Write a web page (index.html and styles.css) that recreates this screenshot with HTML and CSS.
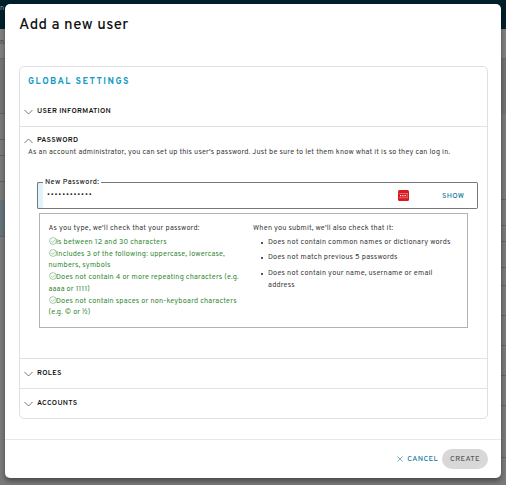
FILE: index.html
```html
<!DOCTYPE html>
<html lang="en">
<head>
<meta charset="utf-8">
<title>Add a new user</title>
<link rel="stylesheet" href="styles.css">
</head>
<body>
<div class="backdrop" aria-hidden="true">
  <div class="topbar">n</div>
  <div class="crumbs">n</div>
  <div class="page">
    <div class="rail"><i class="r1"></i><i class="r2"></i><i class="r3"></i><i class="r4"></i><i class="r5"></i></div>
    <div class="rail right"><i class="q1"></i><i class="q2"></i><i class="q3"></i><i class="q4"></i><i class="q5"></i><i class="q6"></i><i class="q7"></i><i class="q7"></i><i class="q7"></i><i class="q7"></i><i class="q9"></i></div>
  </div>
</div>
<main class="modal">
  <h1>Add a new user</h1>
  <section class="card">
    <h2>GLOBAL SETTINGS</h2>
    <div class="row info"><svg class="chev" viewBox="0 0 9 6"><path d="M.5 1 4.5 5l4-4"/></svg><span>USER INFORMATION</span></div>
    <div class="panel">
      <div class="row head"><svg class="chev" viewBox="0 0 9 6"><path d="M.5 5 4.5 1l4 4"/></svg><span>PASSWORD</span></div>
      <p class="desc">As an account administrator, you can set up this user's password. Just be sure to let them know what it is so they can log in.</p>
      <div class="field">
        <label>New Password:</label>
        <span class="dots">••••••••••••</span>
        <svg class="manager" viewBox="0 0 11 11"><rect width="11" height="11" rx="1.5" fill="#d71920"/><path d="M1 3.5h9M1 7.8h9M9.3 3.7v3.6" stroke="#f29b9b" stroke-width=".6"/><path d="M2 5.6h1.2M4.3 5.6h1.2M6.6 5.6h1.2" stroke="#fff" stroke-width="1.3"/></svg>
        <span class="show">SHOW</span>
      </div>
      <div class="rules">
        <div class="typed">
          <p>As you type, we'll check that your password:</p>
          <div class="ok"><svg viewBox="0 0 8 8"><circle cx="4" cy="4" r="3.4"/><path d="m2.3 4 1.3 1.3L6 2.8"/></svg>Is between 12 and 30 characters</div>
          <div class="ok"><svg viewBox="0 0 8 8"><circle cx="4" cy="4" r="3.4"/><path d="m2.3 4 1.3 1.3L6 2.8"/></svg>Includes 3 of the following: uppercase, lowercase,<br>numbers, symbols</div>
          <div class="ok"><svg viewBox="0 0 8 8"><circle cx="4" cy="4" r="3.4"/><path d="m2.3 4 1.3 1.3L6 2.8"/></svg>Does not contain 4 or more repeating characters (e.g.<br>aaaa or 1111)</div>
          <div class="ok"><svg viewBox="0 0 8 8"><circle cx="4" cy="4" r="3.4"/><path d="m2.3 4 1.3 1.3L6 2.8"/></svg>Does not contain spaces or non-keyboard characters<br>(e.g. © or ½)</div>
        </div>
        <div class="submitted">
          <p>When you submit, we'll also check that it:</p>
          <ul>
            <li>Does not contain common names or dictionary words</li>
            <li>Does not match previous 5 passwords</li>
            <li>Does not contain your name, username or email<br>address</li>
          </ul>
        </div>
      </div>
    </div>
    <div class="row roles"><svg class="chev" viewBox="0 0 9 6"><path d="M.5 1 4.5 5l4-4"/></svg><span>ROLES</span></div>
    <div class="row accounts"><svg class="chev" viewBox="0 0 9 6"><path d="M.5 1 4.5 5l4-4"/></svg><span>ACCOUNTS</span></div>
  </section>
  <footer>
    <span class="cancel"><svg viewBox="0 0 6 6"><path d="m.4.4 5.2 5.2M5.6.4.4 5.6"/></svg>CANCEL</span>
    <span class="create">CREATE</span>
  </footer>
</main>
</body>
</html>
```
FILE: styles.css
```css
* { box-sizing: border-box; }
body { margin: 0; width: 506px; height: 485px; overflow: hidden; font-family: Overpass, Roboto, sans-serif; font-size: 7.3px; line-height: 12px; letter-spacing: .18px; color: #3a3a3a; position: relative; display: flex; }
h1, h2, p, ul { margin: 0; padding: 0; }
.backdrop { position: absolute; inset: 0; background: #7a7a7a; display: flex; flex-direction: column; }
.topbar { height: 29px; background: #01202c; color: #8a979c; line-height: 18px; }
.crumbs { height: 30px; background: #808080; border-bottom: 1px solid #6b6b6b; line-height: 28px; color: #444; }
.page { flex: 1; display: flex; justify-content: space-between; }
.rail { width: 6px; display: flex; flex-direction: column; }
.rail i { flex: none; border-bottom: 1px solid #656565; }
.rail .r1 { height: 55px; background: #757575; }
.r2 { height: 26px; }
.r3 { height: 16px; }
.r4 { height: 26px; }
.r5 { height: 55px; background: linear-gradient(transparent 18px, #66757a 18px); }
.rail .q1 { height: 55px; background: #727272; border: 0; }
.q2 { height: 86px; }
.q3 { height: 26px; }
.q4 { height: 16px; }
.q5 { height: 26px; }
.q6 { height: 18px; }
.q7 { height: 30px; }
.q9 { height: 52px; }
.modal { position: relative; display: flex; flex-direction: column; margin: 4px 0 0 5px; width: 496px; height: 474px; background: #fff; border-radius: 5px; box-shadow: 0 3px 5px rgba(0,0,0,.4); padding: 11px 13px 0 14px; }
h1 { font-size: 15px; line-height: 21px; font-weight: 500; letter-spacing: .44px; color: #111; height: 51px; flex: none; }
.card { height: 353px; border: 1px solid #e0e0e0; border-radius: 5px; display: flex; flex-direction: column; flex: none; }
h2 { font-size: 9px; line-height: 12px; font-weight: 700; letter-spacing: 1.46px; color: #159bc9; margin: 9px 0 0 8px; height: 21px; flex: none; }
.row { display: flex; align-items: center; gap: 4px; padding-left: 4px; height: 29px; font-weight: 600; color: #111; letter-spacing: .28px; flex: none; }
.chev { width: 9px; height: 6px; fill: none; stroke: #555; stroke-width: .8; }
.panel { height: 233px; border: solid #e2e2e2; border-width: 1px 0; flex: none; display: flex; flex-direction: column; }
.head { height: 27px; }
.desc { margin: -7px 0 0 8px; white-space: nowrap; }
.field { position: relative; margin: 23px 9px 0 17px; height: 27px; flex: none; border: 1px solid #777; border-left: 5px solid #dff5fb; border-radius: 2px; display: flex; align-items: center; }
.field::before { content: ""; position: absolute; left: -5px; top: -1px; bottom: -1px; width: 5px; border: 1px solid #777; border-right: 0; border-radius: 2px 0 0 2px; background: #dff5fb; }
.field label { position: absolute; top: -6px; left: 1px; padding: 0 2px; height: 9px; background: #fff; color: #222; font-weight: 500; letter-spacing: .4px; line-height: 12px; }
.dots { margin-left: 5px; color: #111; letter-spacing: .85px; width: 350px; flex: none; font-size: 7px; padding-top: 1px; }
.manager { width: 11px; height: 11px; margin-left: 1px; flex: none; }
.show { margin-left: 33px; color: #167ba0; font-weight: 500; letter-spacing: .3px; font-size: 7.4px; }
.rules { margin: 4px 19px 0 19px; height: 115px; border: 1px solid #aeb5b8; display: flex; padding: 9px 8.5px; white-space: nowrap; flex: none; line-height: 11.75px; }
.typed { width: 204.5px; flex: none; }
.rules p { height: 13.8px; }
.ok { color: #348a35; }
.ok svg { width: 8px; height: 8px; vertical-align: -1px; fill: none; stroke: #4b9a4b; stroke-width: .5; display: inline-block; margin-right: -.5px; }
.submitted ul { list-style: none; padding-left: 15px; }
.submitted li { position: relative; margin-bottom: 3.9px; letter-spacing: .2px; }
.submitted li::before { content: ""; position: absolute; width: 2px; height: 2px; border-radius: 50%; background: #222; left: -7px; top: 5px; }
.accounts { border-top: 1px solid #e2e2e2; height: 30px; }
.roles { height: 29px; }
footer { margin: 20px -13px 0 -14px; border-top: 1px solid #e8e8e8; height: 38px; display: flex; justify-content: flex-end; align-items: center; padding-right: 13px; gap: 4px; flex: none; font-size: 7.5px; font-weight: 500; }
.cancel { color: #167ba0; display: flex; align-items: center; gap: 4px; letter-spacing: .35px; }
.cancel svg { width: 6px; height: 6px; stroke: #167ba0; stroke-width: .6; }
.create { width: 46px; height: 20px; border-radius: 10px; background: #d8d8d8; color: #5a5a5a; line-height: 20px; text-align: center; letter-spacing: .35px; }
```
